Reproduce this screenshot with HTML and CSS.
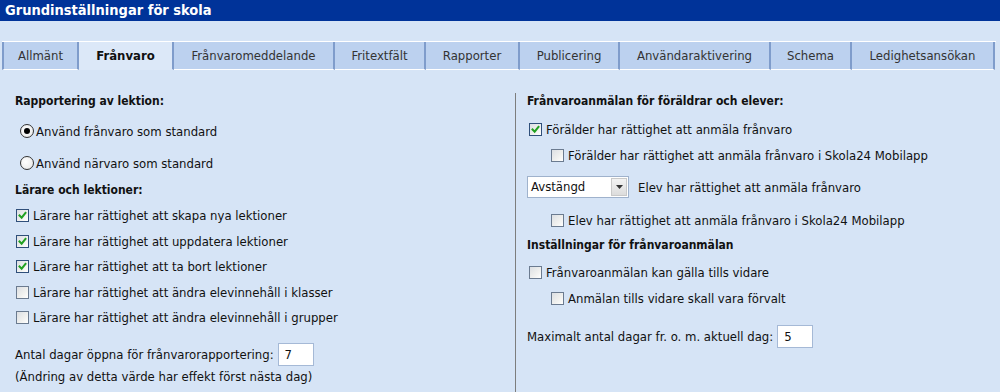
FILE: index.html
```html
<!DOCTYPE html>
<html lang="sv">
<head>
<meta charset="utf-8">
<title>Grundinställningar för skola</title>
<link rel="stylesheet" href="styles.css">
</head>
<body>
<div class="titlebar">Grundinställningar för skola</div>
<div class="tabs">
  <div class="tab">Allmänt</div>
  <div class="tab active">Frånvaro</div>
  <div class="tab">Frånvaromeddelande</div>
  <div class="tab">Fritextfält</div>
  <div class="tab">Rapporter</div>
  <div class="tab">Publicering</div>
  <div class="tab">Användaraktivering</div>
  <div class="tab">Schema</div>
  <div class="tab">Ledighetsansökan</div>
</div>
<div class="content">
  <div class="col left">
    <div class="heading">Rapportering av lektion:</div>
    <div class="radio-row first"><span class="radio on"></span>Använd frånvaro som standard</div>
    <div class="radio-row"><span class="radio"></span>Använd närvaro som standard</div>
    <div class="heading h2">Lärare och lektioner:</div>
    <div class="cb-list">
      <div class="cb-row"><span class="cb on"><svg viewBox="0 0 13 13"><path d="M3 6.5 L5.5 9 L10 3.5" /></svg></span>Lärare har rättighet att skapa nya lektioner</div>
      <div class="cb-row"><span class="cb on"><svg viewBox="0 0 13 13"><path d="M3 6.5 L5.5 9 L10 3.5" /></svg></span>Lärare har rättighet att uppdatera lektioner</div>
      <div class="cb-row"><span class="cb on"><svg viewBox="0 0 13 13"><path d="M3 6.5 L5.5 9 L10 3.5" /></svg></span>Lärare har rättighet att ta bort lektioner</div>
      <div class="cb-row"><span class="cb"></span>Lärare har rättighet att ändra elevinnehåll i klasser</div>
      <div class="cb-row"><span class="cb"></span>Lärare har rättighet att ändra elevinnehåll i grupper</div>
    </div>
    <div class="field-row days">Antal dagar öppna för frånvarorapportering:<span class="textbox">7</span></div>
    <div class="note">(Ändring av detta värde har effekt först nästa dag)</div>
  </div>
  <div class="col right">
    <div class="heading">Frånvaroanmälan för föräldrar och elever:</div>
    <div class="r-list">
      <div class="cb-row r"><span class="cb on"><svg viewBox="0 0 13 13"><path d="M3 6.5 L5.5 9 L10 3.5" /></svg></span>Förälder har rättighet att anmäla frånvaro</div>
      <div class="cb-row r indent"><span class="cb"></span>Förälder har rättighet att anmäla frånvaro i Skola24 Mobilapp</div>
    </div>
    <div class="select-row">
      <span class="select"><span class="select-val">Avstängd</span><span class="select-btn"><svg viewBox="0 0 7 4"><path d="M0 0 H7 L3.5 4 Z"/></svg></span></span>
      <span class="select-label">Elev har rättighet att anmäla frånvaro</span>
    </div>
    <div class="cb-row r indent elev">
      <span class="cb"></span>Elev har rättighet att anmäla frånvaro i Skola24 Mobilapp</div>
    <div class="heading h3">Inställningar för frånvaroanmälan</div>
    <div class="r-list2">
      <div class="cb-row r"><span class="cb"></span>Frånvaroanmälan kan gälla tills vidare</div>
      <div class="cb-row r indent"><span class="cb"></span>Anmälan tills vidare skall vara förvalt</div>
    </div>
    <div class="field-row maxdays">Maximalt antal dagar fr. o. m. aktuell dag:<span class="textbox">5</span></div>
  </div>
</div>
</body>
</html>
```
FILE: styles.css
```css
* { box-sizing: border-box; }
html, body { margin: 0; padding: 0; }
body {
  background: #d6e4f6;
  font-family: "DejaVu Sans Condensed", "DejaVu Sans", sans-serif;
  font-size: 13px;
  color: #111;
  width: 1000px;
  height: 392px;
  overflow: hidden;
}
.titlebar {
  background: #003399;
  color: #fff;
  font-weight: bold;
  font-size: 14.5px;
  height: 21px;
  line-height: 21px;
  padding-left: 5px;
}
.tabs {
  display: flex;
  margin: 20px 0 0 2px;
  width: 994px;
  height: 29px;
  border-top: 1px solid #fff;
}
.tab {
  background: #bcd1ef;
  color: #333;
  font-size: 13px;
  line-height: 27px;
  height: 28px;
  border-bottom: 1px solid #fff;
  border-right: 2px solid #7f9ccb;
  padding: 0;
  text-align: center;
  white-space: nowrap;
  flex: none;
}
.tab:first-child { border-left: 2px solid #7f9ccb; }
.tab.active {
  background: #dce8f8;
  color: #111;
  font-weight: bold;
  border-bottom-color: #dce8f8;
}
.tabs .tab:nth-child(1) { width: 77px; }
.tabs .tab:nth-child(2) { width: 95px; }
.tabs .tab:nth-child(3) { width: 161px; }
.tabs .tab:nth-child(4) { width: 91px; }
.tabs .tab:nth-child(5) { width: 94px; }
.tabs .tab:nth-child(6) { width: 100px; }
.tabs .tab:nth-child(7) { width: 151px; }
.tabs .tab:nth-child(8) { width: 81px; }
.tabs .tab:nth-child(9) { width: 143px; }

.content {
  display: flex;
  margin-top: 23px;
}
.col { display: flex; flex-direction: column; }
.left {
  width: 516px;
  padding-left: 15px;
  border-right: 1px solid #7d7d7d;
  height: 310px;
}
.right { padding-left: 11px; }

.heading {
  font-weight: bold;
  font-size: 12px;
  line-height: 16px;
  height: 16px;
}
.radio-row {
  display: flex;
  align-items: center;
  height: 20px;
  margin-top: 12px;
  padding-left: 5px;
}
.radio {
  width: 14px;
  height: 14px;
  border-radius: 50%;
  border: 1px solid #333;
  background: radial-gradient(circle at 40% 40%, #ffffff 0%, #efefef 65%, #d4d4d4 100%);
  margin-right: 2px;
  position: relative;
  flex: none;
}
.radio.on::after {
  content: "";
  position: absolute;
  left: 3px; top: 3px;
  width: 6px; height: 6px;
  border-radius: 50%;
  background: #000;
}
.heading.h2 { margin-top: 9px; }
.cb-list { margin-top: 5px; display: flex; flex-direction: column; }
.cb-row {
  display: flex;
  align-items: center;
  height: 25.5px;
  padding-left: 1px;
}
.cb {
  width: 13px;
  height: 13px;
  border: 1px solid #6b7b90;
  background: linear-gradient(135deg, #dcdfe3 0%, #f1f1ef 60%, #ffffff 100%);
  margin-right: 4px;
  flex: none;
  display: inline-flex;
}
.cb.on { border-color: #2f4f7a; }
.cb svg { width: 11px; height: 11px; }
.cb svg path {
  fill: none;
  stroke: #21a121;
  stroke-width: 2.4;
  stroke-linecap: square;
}
.field-row {
  display: flex;
  align-items: center;
  height: 23px;
}
.field-row.days { margin-top: 12.5px; }
.textbox {
  display: inline-block;
  width: 36px;
  height: 23px;
  line-height: 21px;
  background: #fff;
  border: 1px solid #a5b9d6;
  padding-left: 6px;
  margin-left: 4px;
}
.note { margin-top: 3px; line-height: 16px; }

.r-list { margin-top: 7px; display: flex; flex-direction: column; }
.cb-row.r { height: 26px; padding-left: 2px; }
.cb-row.indent { padding-left: 24px; }
.select-row {
  display: flex;
  align-items: center;
  margin-top: 8px;
  height: 22px;
}
.select {
  display: flex;
  width: 102px;
  height: 22px;
  background: #fff;
  border: 1px solid #9fb2cc;
  padding: 1px;
}
.select-val {
  flex: 1;
  line-height: 18px;
  padding-left: 2px;
}
.select-btn {
  width: 16px;
  height: 18px;
  background: linear-gradient(#f3f3f3, #dcdcdc);
  border: 1px solid #c9c9c9;
  display: flex;
  align-items: center;
  justify-content: center;
}
.select-btn svg { width: 7px; height: 4px; fill: #333; }
.select-label { margin-left: 9px; }
.cb-row.elev { margin-top: 9px; }
.heading.h3 { margin-top: 4px; }
.r-list2 { margin-top: 6px; display: flex; flex-direction: column; }
.field-row.maxdays { margin-top: 14px; }
```
